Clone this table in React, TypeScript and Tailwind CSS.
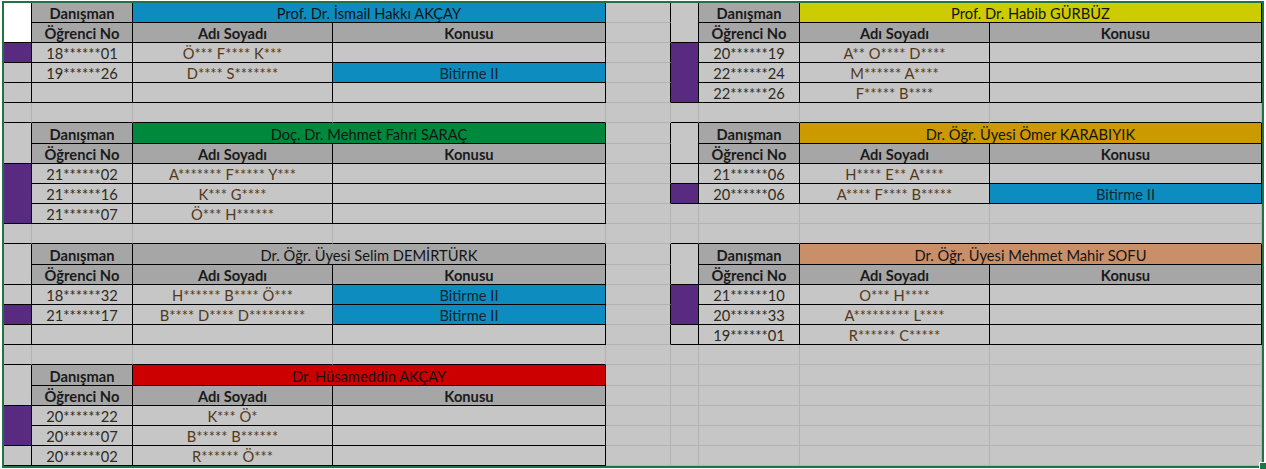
import clsx from "clsx";

type Row = { no: string; name: string; topic?: string };
type Mark = { span: number; purple?: boolean };
type Sheet = {
  advisor: string;
  head: string;
  rows: Row[];
  marks: Mark[];
  filler?: number;
  white?: boolean;
};

const GRID = "border-[#b3b3b3]";
const LEFT = "grid-cols-[28px_101px_200px_273px]";
const RIGHT = "grid-cols-[28px_101px_190px_272px]";
const WIDTHS_L = ["w-[28px]", "w-[101px]", "w-[200px]", "w-[273px]"];
const WIDTHS_R = ["w-[28px]", "w-[101px]", "w-[190px]", "w-[272px]"];

const SPAN: Record<number, string> = { 1: "row-span-1", 2: "row-span-2", 3: "row-span-3" };

function Cell({ className, children }: { className?: string; children?: React.ReactNode }) {
  return (
    <div
      className={clsx(
        "box-border flex items-center justify-center overflow-hidden whitespace-nowrap border-r border-b pt-[2px] leading-none",
        className
      )}
    >
      {children}
    </div>
  );
}

function Table({ t, cols, rowsClass }: { t: Sheet; cols: string; rowsClass: string }) {
  const cells: React.ReactNode[] = [];
  // where each col A block starts (0-based data row)
  const starts: Record<number, Mark> = {};
  let r = 0;
  t.marks.forEach((m) => {
    starts[r] = m;
    r += m.span;
  });

  cells.push(
    <Cell key="a" className={clsx("row-span-2 border-black", t.white ? "bg-white" : "bg-[#c6c6c6]")} />
  );
  cells.push(
    <Cell key="b" className="border-black bg-[#a6a6a6] font-bold text-[#1a1a1a]">
      Danışman
    </Cell>
  );
  cells.push(
    <Cell key="c" className={clsx("col-span-2 border-black text-[#141414]", t.head)}>
      {t.advisor}
    </Cell>
  );
  ["Öğrenci No", "Adı Soyadı", "Konusu"].forEach((h) =>
    cells.push(
      <Cell key={h} className="border-black bg-[#a6a6a6] font-bold text-[#1a1a1a]">
        {h}
      </Cell>
    )
  );

  t.rows.forEach((row, i) => {
    const m = starts[i];
    if (m)
      cells.push(
        <Cell
          key={"m" + i}
          className={clsx(SPAN[m.span], "border-black", m.purple ? "bg-[#582a80]" : "bg-[#c6c6c6]")}
        />
      );
    cells.push(
      <Cell key={"n" + i} className="border-black text-[#2e2a22]">
        {row.no}
      </Cell>
    );
    cells.push(
      <Cell key={"s" + i} className="border-black text-[#54381a]">
        {row.name}
      </Cell>
    );
    cells.push(
      <Cell
        key={"t" + i}
        className={clsx("border-black text-[#14262e]", row.topic ? "bg-[#0d8cc0]" : "bg-[#c6c6c6]")}
      >
        {row.topic}
      </Cell>
    );
  });

  for (let f = 0; f < (t.filler ?? 0); f++) {
    for (let c = 0; c < 4; c++) cells.push(<Cell key={`f${f}${c}`} className={GRID} />);
  }

  return <div className={clsx("grid bg-[#c6c6c6]", cols, rowsClass)}>{cells}</div>;
}

function Plain({ cols, rowsClass }: { cols: string; rowsClass: string }) {
  return (
    <div className={clsx("grid", cols, rowsClass)}>
      {Array.from({ length: 20 }).map((_, i) => (
        <Cell key={i} className={GRID} />
      ))}
    </div>
  );
}

function Gap({ left, right }: { left: boolean; right: boolean }) {
  return (
    <div className="flex h-[20px]">
      {WIDTHS_L.map((w, i) => (
        <Cell key={"l" + i} className={clsx(w, GRID, left && "border-b-black")} />
      ))}
      <Cell className={clsx("w-[65px]", GRID)} />
      {WIDTHS_R.map((w, i) => (
        <Cell key={"r" + i} className={clsx(w, GRID, right && "border-b-black")} />
      ))}
    </div>
  );
}

function Band({
  left,
  right,
  tall,
  edge,
}: {
  left: Sheet;
  right?: Sheet;
  tall: boolean;
  edge: boolean[];
}) {
  const rowsClass = tall ? "grid-rows-[21px_20px_20px_20px_20px]" : "grid-rows-[20px_20px_20px_20px_20px]";
  return (
    <div className="flex">
      <Table t={left} cols={LEFT} rowsClass={rowsClass} />
      <div className={clsx("grid w-[65px]", rowsClass)}>
        {edge.map((e, i) => (
          <Cell key={i} className={clsx(GRID, e && "border-r-black")} />
        ))}
      </div>
      {right ? <Table t={right} cols={RIGHT} rowsClass={rowsClass} /> : <Plain cols={RIGHT} rowsClass={rowsClass} />}
    </div>
  );
}

const ismail: Sheet = {
  advisor: "Prof. Dr. İsmail Hakkı AKÇAY",
  head: "bg-[#0d8cc0]",
  white: true,
  rows: [
    { no: "18******01", name: "Ö*** F**** K***" },
    { no: "19******26", name: "D**** S*******", topic: "Bitirme II" },
    { no: "", name: "" },
  ],
  marks: [{ span: 1, purple: true }, { span: 1 }, { span: 1 }],
};

const habib: Sheet = {
  advisor: "Prof. Dr. Habib GÜRBÜZ",
  head: "bg-[#cccc00]",
  rows: [
    { no: "20******19", name: "A** O**** D****" },
    { no: "22******24", name: "M****** A****" },
    { no: "22******26", name: "F***** B****" },
  ],
  marks: [{ span: 3, purple: true }],
};

const fahri: Sheet = {
  advisor: "Doç. Dr. Mehmet Fahri SARAÇ",
  head: "bg-[#00893d]",
  rows: [
    { no: "21******02", name: "A******* F***** Y***" },
    { no: "21******16", name: "K*** G****" },
    { no: "21******07", name: "Ö*** H******" },
  ],
  marks: [{ span: 3, purple: true }],
};

const omer: Sheet = {
  advisor: "Dr. Öğr. Üyesi Ömer KARABIYIK",
  head: "bg-[#cc9900]",
  rows: [
    { no: "21******06", name: "H**** E** A****" },
    { no: "20******06", name: "A**** F**** B*****", topic: "Bitirme II" },
  ],
  marks: [{ span: 1 }, { span: 1, purple: true }],
  filler: 1,
};

const selim: Sheet = {
  advisor: "Dr. Öğr. Üyesi Selim DEMİRTÜRK",
  head: "bg-[#a6a6a6]",
  rows: [
    { no: "18******32", name: "H****** B**** Ö***", topic: "Bitirme II" },
    { no: "21******17", name: "B**** D**** D*********", topic: "Bitirme II" },
    { no: "", name: "" },
  ],
  marks: [{ span: 1 }, { span: 1, purple: true }, { span: 1 }],
};

const mahir: Sheet = {
  advisor: "Dr. Öğr. Üyesi Mehmet Mahir SOFU",
  head: "bg-[#c98f69]",
  rows: [
    { no: "21******10", name: "O*** H****" },
    { no: "20******33", name: "A********* L****" },
    { no: "19******01", name: "R****** C*****" },
  ],
  marks: [{ span: 2, purple: true }, { span: 1 }],
};

const husameddin: Sheet = {
  advisor: "Dr. Hüsameddin AKÇAY",
  head: "bg-[#cc0000]",
  rows: [
    { no: "20******22", name: "K*** Ö*" },
    { no: "20******07", name: "B***** B******" },
    { no: "20******02", name: "R****** Ö***" },
  ],
  marks: [{ span: 2, purple: true }, { span: 1 }],
};

export default function App() {
  return (
    <div className="h-[469px] w-[1266px] bg-white pl-[2px] pt-[1px] font-['Lato','Liberation_Sans',sans-serif] text-[14.7px]">
      <div className="relative h-[467px] w-[1262px] overflow-hidden border-2 border-[#217346] bg-[#c6c6c6]">
        <Band left={ismail} right={habib} tall={false} edge={[true, true, true, true, true]} />
        <Gap left right />
        <Band left={fahri} right={omer} tall edge={[true, true, true, true, false]} />
        <Gap left right />
        <Band left={selim} right={mahir} tall edge={[true, true, true, true, true]} />
        <Gap left right={false} />
        <Band left={husameddin} tall edge={[false, false, false, false, false]} />
      </div>
      <div className="absolute left-[1259px] top-[462px] h-[7px] w-[7px] border-l border-t border-white bg-[#217346]" />
    </div>
  );
}
